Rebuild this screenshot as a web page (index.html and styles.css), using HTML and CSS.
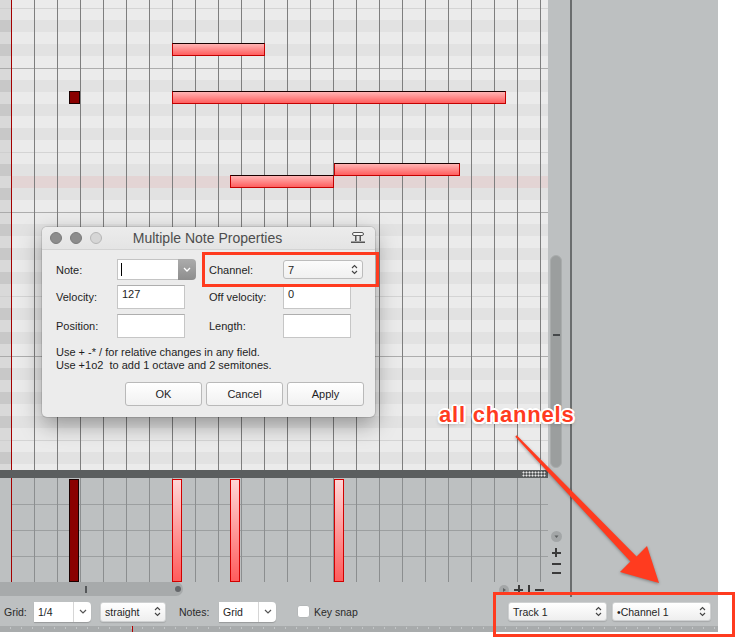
FILE: index.html
```html
<!DOCTYPE html>
<html lang="en">
<head>
  <meta charset="UTF-8" />
  <meta name="viewport" content="width=device-width, initial-scale=1.0"/>
  <title>Piano Roll</title>
  <link rel="stylesheet" href="styles.css">
</head>
<body>

  <div class="window">
    <div class="workspace">

      <!-- Editor: notes, velocity lane, horizontal scroller -->
      <div class="editor">
        <div class="roll">
          <div class="keys"></div>
          <div class="grid">
            <div class="note picked" style="left:57px;top:91px;width:11px"></div>
            <div class="note" style="left:160px;top:43px;width:93px"></div>
            <div class="note" style="left:160px;top:91px;width:334px"></div>
            <div class="note" style="left:322px;top:163px;width:126px"></div>
            <div class="note" style="left:218px;top:175px;width:104px"></div>
          </div>
        </div>

        <div class="splitter"><span class="grip"></span></div>

        <div class="velocity">
          <div class="lane-keys"></div>
          <div class="lane">
            <div class="vel picked" style="left:57px"></div>
            <div class="vel" style="left:160px"></div>
            <div class="vel" style="left:218px"></div>
            <div class="vel" style="left:322px"></div>
          </div>
        </div>

        <div class="hscroll">
          <div class="hthumb"><span class="hmark"></span><span class="hdot"></span></div>
          <div class="hzoom">
            <svg class="zbtn" width="10" height="10" viewBox="0 0 10 10"><circle cx="5" cy="5" r="5" fill="#a3a6a7"/><polygon points="4,3 7,5 4,7" fill="#5c5f60"/></svg>
            <span class="zplus"></span>
            <span class="zbar"></span>
            <span class="zminus"></span>
          </div>
        </div>
      </div>

      <!-- Vertical scroller with zoom buttons -->
      <div class="vscroll">
        <div class="vthumb"><span class="vmark"></span></div>
        <div class="vzoom">
          <svg class="zbtn" width="11" height="11" viewBox="0 0 11 11"><circle cx="5.5" cy="5.5" r="5.5" fill="#a3a6a7"/><polygon points="3.5,4.5 7.5,4.5 5.5,7" fill="#5c5f60"/></svg>
          <span class="zplus"></span>
          <span class="zminus"></span>
          <span class="zminus"></span>
        </div>
      </div>

      <div class="side"></div>
    </div>

    <!-- Bottom toolbar -->
    <div class="toolbar">
      <span class="tb-label grid-label">Grid:</span>
      <div class="select">
        <span class="select-text">1/4</span>
        <span class="select-btn">
          <svg width="8" height="5" viewBox="0 0 8 5"><polyline points="1,1 4,4 7,1" fill="none" stroke="#555" stroke-width="1.2"/></svg>
        </span>
      </div>
      <div class="popup straight">
        <span>straight</span>
        <svg width="7" height="11" viewBox="0 0 7 11"><polyline points="1,4 3.5,1.5 6,4" fill="none" stroke="#444" stroke-width="1.1"/><polyline points="1,7 3.5,9.5 6,7" fill="none" stroke="#444" stroke-width="1.1"/></svg>
      </div>
      <span class="tb-label notes-label">Notes:</span>
      <div class="select">
        <span class="select-text">Grid</span>
        <span class="select-btn">
          <svg width="8" height="5" viewBox="0 0 8 5"><polyline points="1,1 4,4 7,1" fill="none" stroke="#555" stroke-width="1.2"/></svg>
        </span>
      </div>
      <span class="checkbox"></span>
      <span class="tb-label">Key snap</span>

      <div class="popup track">
        <span>Track 1</span>
        <svg width="7" height="11" viewBox="0 0 7 11"><polyline points="1,4 3.5,1.5 6,4" fill="none" stroke="#444" stroke-width="1.1"/><polyline points="1,7 3.5,9.5 6,7" fill="none" stroke="#444" stroke-width="1.1"/></svg>
      </div>
      <div class="popup channel">
        <span>&bull;Channel 1</span>
        <svg width="7" height="11" viewBox="0 0 7 11"><polyline points="1,4 3.5,1.5 6,4" fill="none" stroke="#444" stroke-width="1.1"/><polyline points="1,7 3.5,9.5 6,7" fill="none" stroke="#444" stroke-width="1.1"/></svg>
      </div>
    </div>

    <div class="ruler"></div>
  </div>

  <!-- Multiple Note Properties dialog -->
  <div class="dialog">
    <div class="titlebar">
      <div class="lights">
        <span class="light"></span>
        <span class="light"></span>
        <span class="light off"></span>
      </div>
      <span class="title">Multiple Note Properties</span>
      <svg class="pin" width="14" height="12" viewBox="0 0 14 12">
        <rect x="1.5" y="0.5" width="11" height="3" rx="1.5" fill="#f6f6f6" stroke="#555"/>
        <rect x="4" y="3.5" width="1.5" height="5.5" fill="#555"/>
        <rect x="8.5" y="3.5" width="1.5" height="5.5" fill="#555"/>
        <rect x="0" y="9.5" width="14" height="1.5" fill="#555"/>
      </svg>
    </div>

    <div class="dlg-body">
      <div class="form">
        <label>Note:</label>
        <div class="combo">
          <span class="combo-field"><span class="caret"></span></span>
          <span class="combo-btn">
            <svg width="8" height="5" viewBox="0 0 8 5"><polyline points="1,1 4,4 7,1" fill="none" stroke="#fff" stroke-width="1.3"/></svg>
          </span>
        </div>
        <label>Channel:</label>
        <div class="popup dlg-popup">
          <span>7</span>
          <svg width="7" height="11" viewBox="0 0 7 11"><polyline points="1,4 3.5,1.5 6,4" fill="none" stroke="#444" stroke-width="1.1"/><polyline points="1,7 3.5,9.5 6,7" fill="none" stroke="#444" stroke-width="1.1"/></svg>
        </div>

        <label>Velocity:</label>
        <div class="field">127</div>
        <label>Off velocity:</label>
        <div class="field">0</div>

        <label>Position:</label>
        <div class="field"></div>
        <label>Length:</label>
        <div class="field"></div>
      </div>

      <p class="hint">Use + -* / for relative changes in any field.<br>Use +1o2&nbsp; to add 1 octave and 2 semitones.</p>

      <div class="buttons">
        <button>OK</button>
        <button>Cancel</button>
        <button>Apply</button>
      </div>
    </div>
  </div>

  <!-- Callouts -->
  <div class="mark channel-mark"></div>
  <div class="mark toolbar-mark"></div>
  <div class="callout">all channels</div>
  <svg class="arrow" width="735" height="638" viewBox="0 0 735 638">
    <polygon points="516.7,435.3 636.6,556.4 647,546 659,583 620,572 630.4,561.6 515.3,436.7" fill="#ff3b1f"/>
  </svg>

</body>
</html>
```

FILE: styles.css
```css
body {
  margin: 0;
  background: #fff;
  font-family: 'Liberation Sans', Arial, sans-serif;
  font-size: 11px;
  color: #1e1e1e;
}

.window {
  width: 718px;
  height: 632px;
  background: #bdc0c1;
  display: flex;
  flex-direction: column;
}

.workspace {
  display: flex;
  height: 597px;
}

.editor {
  width: 548px;
  display: flex;
  flex-direction: column;
}

/* note grid: 12px rows, octave lines, 23px beats */
.roll {
  height: 470px;
  display: flex;
}

.keys {
  width: 11px;
  border-right: 1px solid #a30000;
  background:
    linear-gradient(to bottom, #cfcfcf 0 1px, transparent 1px 60px, #ababab 60px 61px, transparent 61px) 0 8px / 100% 144px,
    linear-gradient(to bottom,
      #d9d9d9 0 12px, #c8c8c8 12px 24px, #d9d9d9 24px 36px, #c8c8c8 36px 48px,
      #d9d9d9 48px 72px, #c8c8c8 72px 84px, #d9d9d9 84px 96px, #c8c8c8 96px 108px,
      #d9d9d9 108px 120px, #c8c8c8 120px 132px, #d9d9d9 132px 144px) 0 8px / 100% 144px;
}

.grid {
  flex: 1;
  position: relative;
  overflow: hidden;
  background:
    repeating-linear-gradient(to right, transparent 0 22px, #7e7e7e 22px 23px),
    linear-gradient(#e3d4d4, #e3d4d4) 0 176px / 100% 12px no-repeat,
    linear-gradient(to bottom, #d4d4d4 0 1px, transparent 1px 60px, #adadad 60px 61px, transparent 61px) 0 8px / 100% 144px,
    linear-gradient(to bottom,
      #ebebeb 0 12px, #e2e2e2 12px 24px, #ebebeb 24px 36px, #e2e2e2 36px 48px,
      #ebebeb 48px 72px, #e2e2e2 72px 84px, #ebebeb 84px 96px, #e2e2e2 96px 108px,
      #ebebeb 108px 120px, #e2e2e2 120px 132px, #ebebeb 132px 144px) 0 8px / 100% 144px;
}

.note {
  position: absolute;
  height: 13px;
  box-sizing: border-box;
  border: 1px solid #c40000;
  border-top-color: #1a0000;
  background: linear-gradient(#ffb4b4, #ff5e5e);
}

.note.picked {
  background: #8a0000;
  border-color: #1a0000;
}

.splitter {
  height: 8px;
  background: #5b5e5f;
  display: flex;
  align-items: center;
  justify-content: flex-end;
}

.grip {
  width: 24px;
  height: 6px;
  margin-right: 2px;
  background: radial-gradient(circle, #e8e8e8 0.9px, transparent 1.1px) 0 0 / 3px 3px;
}

/* velocity lane */
.velocity {
  height: 104px;
  display: flex;
}

.lane-keys {
  width: 11px;
  border-right: 1px solid #a30000;
}

.lane {
  flex: 1;
  position: relative;
  background:
    repeating-linear-gradient(to right, transparent 0 22px, #8b8e8f 22px 23px),
    linear-gradient(to bottom, transparent 0 26px, #9c9fa0 26px 27px, transparent 27px 52px,
      #9c9fa0 52px 53px, transparent 53px 78px, #9c9fa0 78px 79px, transparent 79px);
}

.vel {
  position: absolute;
  top: 1px;
  bottom: 0;
  width: 10px;
  box-sizing: border-box;
  border: 1px solid #d20000;
  background: linear-gradient(#ffd6d6, #ff5c5c);
}

.vel.picked {
  background: #8a0000;
  border-color: #1a0000;
}

.hscroll {
  height: 15px;
  display: flex;
}

.hthumb {
  width: 183px;
  height: 14px;
  background: #a7aaab;
  border-radius: 0 7px 7px 0;
  display: flex;
  align-items: center;
}

.hmark {
  width: 2px;
  height: 7px;
  margin-left: 85px;
  background: #55585a;
}

.hdot {
  width: 6px;
  height: 6px;
  margin-left: 88px;
  border-radius: 50%;
  background: #64676a;
}

.hzoom {
  margin-left: auto;
  margin-right: 4px;
  display: flex;
  align-items: center;
  gap: 5px;
}

.zbtn {
  display: block;
}

.zplus {
  width: 9px;
  height: 9px;
  background:
    linear-gradient(#3a3a3a, #3a3a3a) center / 9px 2px no-repeat,
    linear-gradient(#3a3a3a, #3a3a3a) center / 2px 9px no-repeat;
}

.zminus {
  width: 9px;
  height: 2px;
  background: #3a3a3a;
}

.zbar {
  width: 2px;
  height: 9px;
  background: #3a3a3a;
}

/* vertical scroller */
.vscroll {
  width: 22px;
  border-right: 2px solid #6a6d6e;
  display: flex;
  flex-direction: column;
}

.vthumb {
  margin: 255px 0 0 2px;
  width: 12px;
  height: 213px;
  box-sizing: border-box;
  background: #9b9e9e;
  border: 1px solid #a9acac;
  border-radius: 6px;
  display: flex;
  flex-direction: column;
  align-items: center;
}

.vmark {
  width: 7px;
  height: 2px;
  margin-top: 78px;
  background: #45484a;
}

.vzoom {
  margin: auto 0 23px 2px;
  width: 12px;
  display: flex;
  flex-direction: column;
  align-items: center;
  gap: 6px;
}

.vzoom .zminus + .zminus {
  margin-top: 1px;
}

.side {
  flex: 1;
}

/* toolbar */
.toolbar {
  height: 29px;
  display: flex;
  align-items: center;
  padding: 0 7px 0 4px;
  font-size: 10.5px;
}

.tb-label {
  color: #2a2a2a;
}

.grid-label {
  width: 30px;
}

.notes-label {
  width: 40px;
  margin-left: 13px;
}

.select {
  width: 57px;
  height: 20px;
  display: flex;
  background: #fff;
  border-radius: 0 4px 4px 0;
  box-shadow: 0 1px 1px rgba(0, 0, 0, 0.2);
}

.select-text {
  width: 40px;
  padding-left: 4px;
  line-height: 20px;
  border-right: 1px solid #d6d6d6;
  box-sizing: border-box;
}

.select-btn {
  flex: 1;
  display: flex;
  align-items: center;
  justify-content: center;
}

.popup {
  height: 19px;
  box-sizing: border-box;
  padding: 0 4px 0 4px;
  display: flex;
  align-items: center;
  justify-content: space-between;
  background: linear-gradient(#ffffff, #eeeeee);
  border: 1px solid #cfd1d2;
  border-radius: 3px;
  box-shadow: 0 1px 1px rgba(0, 0, 0, 0.12);
}

.straight {
  width: 66px;
  height: 20px;
  margin-left: 9px;
}

.checkbox {
  width: 13px;
  height: 13px;
  box-sizing: border-box;
  margin: 0 4px 0 21px;
  background: #fff;
  border: 1px solid #b5b8b9;
  border-radius: 3px;
}

.track {
  width: 99px;
  margin-left: auto;
}

.channel {
  width: 99px;
  margin-left: 5px;
}

.ruler {
  height: 6px;
  background:
    linear-gradient(to right, transparent 132px, #b40000 132px 133px, transparent 133px),
    repeating-linear-gradient(to right, transparent 0 10px, #c3c6c7 10px 11px) 0 1px / 100% 2px no-repeat,
    #a8abac;
}

/* dialog */
.dialog {
  position: absolute;
  left: 42px;
  top: 227px;
  width: 333px;
  height: 190px;
  background: #ececec;
  border-radius: 5px;
  box-shadow: 0 8px 22px rgba(0, 0, 0, 0.35), 0 0 0 1px rgba(0, 0, 0, 0.1);
  overflow: hidden;
}

.titlebar {
  height: 22px;
  display: grid;
  grid-template-columns: 1fr auto 1fr;
  align-items: center;
  padding: 0 10px 0 8px;
  border-bottom: 1px solid #d3d3d3;
  background: linear-gradient(#ececec, #e4e4e4);
}

.lights {
  display: flex;
  gap: 8px;
}

.light {
  width: 12px;
  height: 12px;
  box-sizing: border-box;
  border-radius: 50%;
  background: #8d8d8d;
  border: 1px solid #7a7a7a;
}

.light.off {
  background: #d6d6d6;
  border-color: #b6b6b6;
}

.title {
  font-size: 14px;
  color: #4d4d4d;
}

.pin {
  justify-self: end;
}

.dlg-body {
  padding: 9px 0 0 14px;
}

.form {
  display: grid;
  grid-template-columns: 61px 92px 74px 1fr;
  grid-template-rows: 21px 24px 24px;
  row-gap: 5px;
  align-items: center;
}

.combo {
  width: 79px;
  height: 21px;
  display: flex;
}

.combo-field {
  width: 61px;
  box-sizing: border-box;
  background: #fff;
  border: 1px solid #c4c4c4;
  border-right: none;
  display: flex;
  align-items: center;
  padding-left: 3px;
}

.caret {
  width: 1px;
  height: 13px;
  background: #000;
}

.combo-btn {
  flex: 1;
  display: flex;
  align-items: center;
  justify-content: center;
  background: linear-gradient(#acacac, #8d8d8d);
  border-radius: 0 4px 4px 0;
}

.dlg-popup {
  width: 80px;
  border-color: #bcbcbc;
  box-shadow: none;
  background: linear-gradient(#fbfbfb, #f0f0f0);
}

.field {
  width: 68px;
  height: 24px;
  box-sizing: border-box;
  padding: 2px 4px;
  line-height: 13px;
  background: #fff;
  border: 1px solid #c6c6c6;
  border-top-color: #aeaeae;
}

.hint {
  margin: 8px 0 0;
  line-height: 13px;
}

.buttons {
  display: flex;
  justify-content: flex-end;
  gap: 4px;
  margin: 10px 11px 0 0;
}

.buttons button {
  width: 77px;
  height: 24px;
  font-family: inherit;
  font-size: 11px;
  color: #1e1e1e;
  background: linear-gradient(#ffffff, #f1f1f1);
  border: 1px solid #b9b9b9;
  border-radius: 3px;
  padding: 0;
}

/* callouts */
.mark {
  position: absolute;
  box-sizing: border-box;
  border: 3px solid #ff3b1f;
}

.channel-mark {
  left: 202px;
  top: 252px;
  width: 177px;
  height: 35px;
}

.toolbar-mark {
  left: 493px;
  top: 592px;
  width: 242px;
  height: 45px;
}

.callout {
  position: absolute;
  left: 439px;
  top: 403px;
  font-size: 22px;
  line-height: 24px;
  font-weight: bold;
  letter-spacing: 0.8px;
  color: #ff3b1f;
  text-shadow:
    -1.5px -1.5px 0 #fff, 1.5px -1.5px 0 #fff, -1.5px 1.5px 0 #fff, 1.5px 1.5px 0 #fff,
    0 -2px 0 #fff, 0 2px 0 #fff, -2px 0 0 #fff, 2px 0 0 #fff,
    0 2px 4px rgba(0, 0, 0, 0.45);
}

.arrow {
  position: absolute;
  left: 0;
  top: 0;
  pointer-events: none;
  filter: drop-shadow(0 1px 1.5px rgba(0, 0, 0, 0.35));
}
```
